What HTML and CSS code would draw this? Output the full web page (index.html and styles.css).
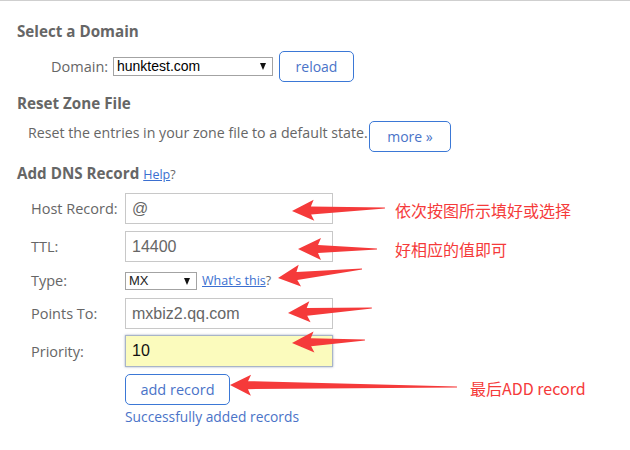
FILE: index.html
```html
<!DOCTYPE html>
<html lang="en">
<head>
    <meta charset="UTF-8">
    <title>DNS Zone Editor</title>
    <link rel="stylesheet" href="styles.css">
</head>
<body>

<div class="page">
    <h3 class="section-title first">Select a Domain</h3>
    <div class="domain-row">
        <label class="domain-label" for="domain">Domain:</label>
        <span class="select-box domain-select">
            <select id="domain"><option>hunktest.com</option></select>
        </span>
        <button type="button" class="btn btn-reload">reload</button>
    </div>

    <h3 class="section-title">Reset Zone File</h3>
    <div class="reset-row">
        <span class="reset-text">Reset the entries in your zone file to a default state.</span>
        <button type="button" class="btn btn-more">more &raquo;</button>
    </div>

    <h3 class="section-title">Add DNS Record <span class="help"><a href="#">Help</a>?</span></h3>

    <!-- record form -->
    <form class="record-form" onsubmit="event.preventDefault();">
        <label class="field-label" for="host">Host Record:</label>
        <input type="text" id="host" class="field" value="@">

        <label class="field-label" for="ttl">TTL:</label>
        <input type="text" id="ttl" class="field" value="14400">

        <label class="field-label row-type" for="type">Type:</label>
        <div class="type-cell row-type">
            <span class="select-box type-select">
                <select id="type"><option>MX</option></select>
            </span>
            <span class="help"><a href="#">What's this</a>?</span>
        </div>

        <label class="field-label row-points" for="points">Points To:</label>
        <input type="text" id="points" class="field row-points" value="mxbiz2.qq.com">

        <label class="field-label row-priority" for="priority">Priority:</label>
        <input type="text" id="priority" class="field field-active row-priority" value="10">

        <div class="empty-cell row-submit"></div>
        <div class="row-submit">
            <button type="submit" class="btn btn-add">add record</button>
        </div>

        <div class="empty-cell"></div>
        <div class="success">Successfully added records</div>
    </form>
</div>

<!-- annotation arrows drawn over the screenshot -->
<svg class="arrows" width="630" height="450" viewBox="0 0 630 450">
    <g fill="#f53a3a">
        <polygon transform="translate(292 211) rotate(-1.85)" points="0,0 22,-10.5 19,-4 93,-0.6 93,0.6 19,4 22,10.5"/>
        <polygon transform="translate(298 249) rotate(0)" points="0,0 23,-11 20,-4 79,-0.6 79,0.6 20,4 23,11"/>
        <polygon transform="translate(278 278) rotate(-6.1)" points="0,0 22,-11 19,-4 84.5,-0.6 84.5,0.6 19,4 22,11"/>
        <polygon transform="translate(288 313) rotate(-3.4)" points="0,0 22,-10.5 19,-4 84,-0.6 84,0.6 19,4 22,10.5"/>
        <polygon transform="translate(292 343) rotate(-2.35)" points="0,0 22,-10.5 19,-4 73,-0.6 73,0.6 19,4 22,10.5"/>
        <polygon transform="translate(230 385) rotate(0.5)" points="0,0 21,-10.5 18,-4 227,-0.6 227,0.6 18,4 21,10.5"/>
    </g>
</svg>

<div class="note note-1">依次按图所示填好或选择</div>
<div class="note note-2">好相应的值即可</div>
<div class="note note-3">最后ADD record</div>

</body>
</html>
```

FILE: styles.css
```css
body {
    margin: 0;
    padding: 0;
    background-color: #fff;
    border-top: 1px solid #cfcfcf;
    font-family: "Open Sans", Lato, sans-serif;
    color: #666;
    width: 630px;
    height: 449px;
    position: relative;
    overflow: hidden;
}

.page {
    padding-left: 17px;
}

.section-title {
    margin: 11px 0 0;
    font-size: 15.2px;
    line-height: 20px;
    font-weight: bold;
    color: #666;
}

.section-title.first {
    margin-top: 20px;
}

.help {
    font-size: 12.5px;
    font-weight: normal;
    color: #666;
}

.help a {
    color: #3b6fd0;
}

/* domain */
.domain-row {
    display: flex;
    align-items: center;
    margin-top: 10px;
    padding-left: 34px;
    height: 31px;
}

.domain-label {
    font-size: 14.5px;
    width: 62px;
}

.select-box {
    position: relative;
    display: inline-block;
    border: 1px solid #a3a3a3;
    box-sizing: border-box;
    background: #fff;
}

.select-box::after {
    content: "";
    position: absolute;
    right: 6px;
    top: 5px;
    border-left: 3.5px solid transparent;
    border-right: 3.5px solid transparent;
    border-top: 7px solid #111;
}

.select-box select {
    appearance: none;
    -webkit-appearance: none;
    display: block;
    border: none;
    outline: none;
    background: transparent;
    font-family: "Liberation Sans", Arial, sans-serif;
    font-size: 14px;
    line-height: 17px;
    color: #000;
    padding: 0 0 0 3px;
    width: 100%;
    height: 100%;
}

.domain-select {
    width: 160px;
    height: 19px;
}

.type-select {
    width: 72px;
    height: 18px;
}

.type-select select {
    font-size: 13px;
    line-height: 16px;
    color: #222;
}

.btn {
    background: #fff;
    border: 1px solid #3b78d6;
    border-radius: 5px;
    color: #4a73c8;
    font-family: "Open Sans", Lato, sans-serif;
    font-size: 14px;
    height: 31px;
    padding: 0;
    box-sizing: border-box;
    cursor: pointer;
}

.btn-reload {
    width: 75px;
    margin-left: 6px;
}

/* reset */
.reset-row {
    display: flex;
    align-items: flex-start;
    margin-top: 8px;
    padding-left: 11px;
}

.reset-text {
    font-size: 14.2px;
    line-height: 20px;
    margin-top: 2px;
    width: 341px;
    white-space: nowrap;
}

.btn-more {
    width: 82px;
}

/* record form */
.record-form {
    display: grid;
    grid-template-columns: 94px 208px;
    align-items: center;
    row-gap: 7px;
    margin-top: 8px;
    padding-left: 14px;
}

.field-label {
    font-size: 14.5px;
}

.field {
    height: 31px;
    border: 1px solid #c8c8c8;
    box-sizing: border-box;
    padding: 0 6px;
    font-family: "Liberation Sans", Arial, sans-serif;
    font-size: 16px;
    color: #666;
    outline: none;
}

.field-active {
    height: 32px;
    background: #fbfbbd;
    border-color: #a8b4c8;
    box-shadow: 0 0 2px rgba(90, 110, 150, 0.6);
    color: #111;
}

.row-type {
    margin-top: 2px;
}

.type-cell {
    display: flex;
    align-items: center;
    gap: 5px;
}

.row-points {
    margin-top: 1px;
}

.row-priority {
    margin-top: -1px;
}

.btn-add {
    width: 105px;
    font-size: 14.5px;
}

.success {
    font-size: 13.8px;
    line-height: 20px;
    color: #4a73c8;
    margin-top: -5px;
    white-space: nowrap;
}

/* annotations */
.arrows {
    position: absolute;
    left: 0;
    top: -1px;
}

.note {
    position: absolute;
    font-family: "Noto Sans CJK SC", sans-serif;
    font-size: 16px;
    line-height: 20px;
    color: #f53a3a;
    white-space: nowrap;
}

.note-1 {
    left: 395px;
    top: 199px;
}

.note-2 {
    left: 395px;
    top: 238px;
}

.note-3 {
    left: 470px;
    top: 377px;
}
```
